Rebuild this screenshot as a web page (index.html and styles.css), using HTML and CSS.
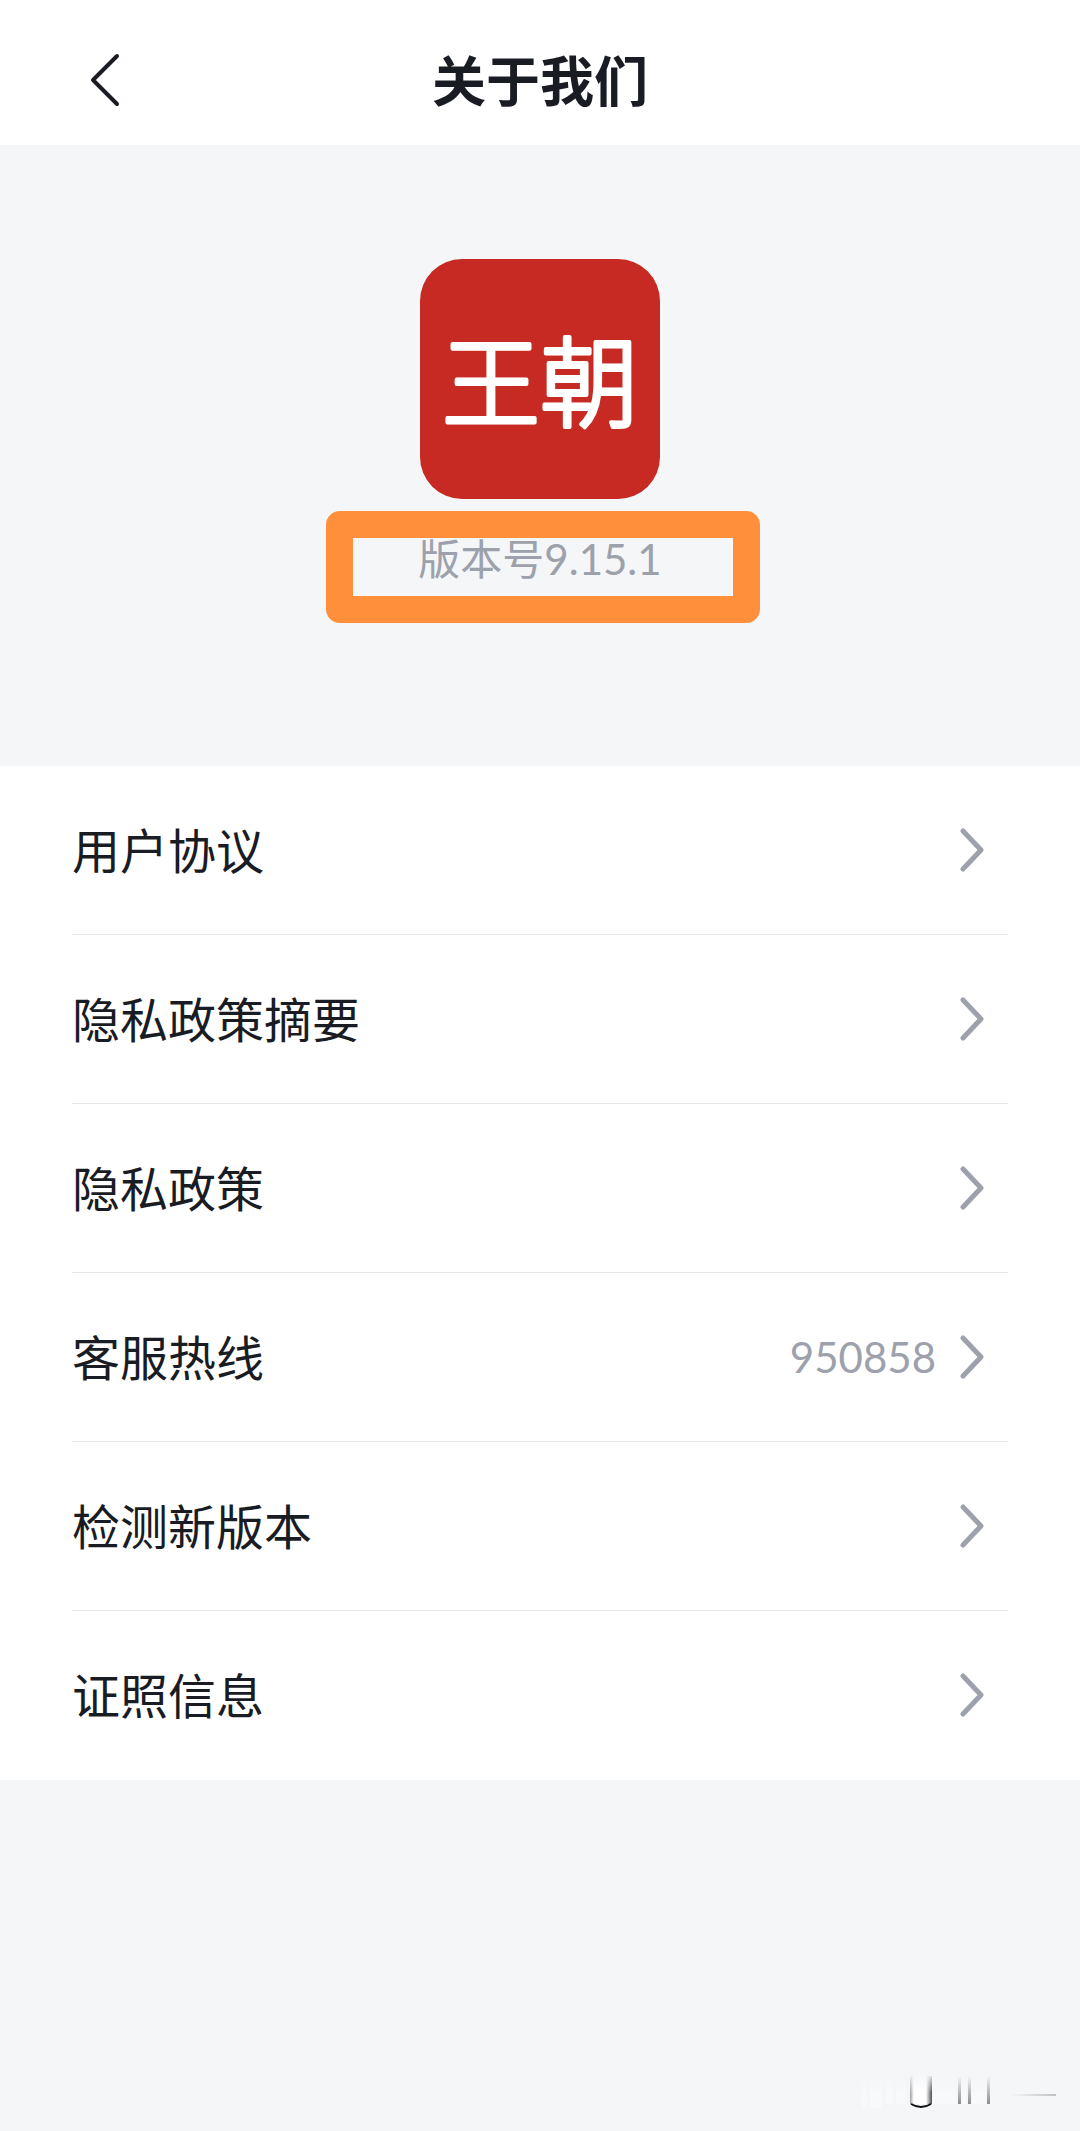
FILE: index.html
```html
<!DOCTYPE html>
<html lang="zh-CN">
<head>
  <meta charset="utf-8">
  <meta name="viewport" content="width=device-width">
  <title>关于我们</title>
  <link rel="stylesheet" href="styles.css">
</head>
<body>
  <header class="header">
    <button class="back" type="button" aria-label="返回">
      <svg width="32" height="56" viewBox="0 0 32 56"><path d="M29 4L5 28l24 24"/></svg>
    </button>
    <h1>关于我们</h1>
  </header>

  <main>
    <section class="about">
      <svg class="logo" width="240" height="240" viewBox="0 0 240 240">
        <rect width="240" height="240" rx="42"/>
        <text x="120" y="160" text-anchor="middle">王朝</text>
      </svg>
      <p class="version">版本号9.15.1</p>
    </section>

    <ul class="menu">
      <li><a href="#">
        <span class="label">用户协议</span>
        <svg class="arrow" width="24" height="44" viewBox="0 0 24 44"><path d="M3 3l18 19L3 41"/></svg>
      </a></li>
      <li><a href="#">
        <span class="label">隐私政策摘要</span>
        <svg class="arrow" width="24" height="44" viewBox="0 0 24 44"><path d="M3 3l18 19L3 41"/></svg>
      </a></li>
      <li><a href="#">
        <span class="label">隐私政策</span>
        <svg class="arrow" width="24" height="44" viewBox="0 0 24 44"><path d="M3 3l18 19L3 41"/></svg>
      </a></li>
      <li><a href="#">
        <span class="label">客服热线</span>
        <span class="value">950858</span>
        <svg class="arrow" width="24" height="44" viewBox="0 0 24 44"><path d="M3 3l18 19L3 41"/></svg>
      </a></li>
      <li><a href="#">
        <span class="label">检测新版本</span>
        <svg class="arrow" width="24" height="44" viewBox="0 0 24 44"><path d="M3 3l18 19L3 41"/></svg>
      </a></li>
      <li><a href="#">
        <span class="label">证照信息</span>
        <svg class="arrow" width="24" height="44" viewBox="0 0 24 44"><path d="M3 3l18 19L3 41"/></svg>
      </a></li>
    </ul>
  </main>

  <!-- faded mark in the corner -->
  <svg class="mark" width="216" height="40" viewBox="0 0 216 40" aria-hidden="true">
    <defs>
      <linearGradient id="fade" x1="0" y1="0" x2="0" y2="1">
        <stop offset="0" stop-color="#222" stop-opacity="0"/>
        <stop offset="1" stop-color="#222" stop-opacity=".5"/>
      </linearGradient>
      <linearGradient id="tail" x1="0" y1="0" x2="1" y2="0">
        <stop offset=".3" stop-color="#222" stop-opacity="0"/>
        <stop offset="1" stop-color="#222" stop-opacity=".25"/>
      </linearGradient>
      <linearGradient id="shadeLeft" x1="0" y1="0" x2="1" y2="0">
        <stop offset="0" stop-color="#222" stop-opacity=".4"/>
        <stop offset="1" stop-color="#222" stop-opacity="0"/>
      </linearGradient>
      <linearGradient id="shadeRight" x1="0" y1="0" x2="1" y2="0">
        <stop offset="0" stop-color="#222" stop-opacity="0"/>
        <stop offset="1" stop-color="#222" stop-opacity=".8"/>
      </linearGradient>
      <linearGradient id="reveal" x1="0" y1="0" x2="0" y2="1">
        <stop offset="0" stop-color="#000"/>
        <stop offset=".5" stop-color="#fff"/>
      </linearGradient>
      <mask id="top"><rect width="216" height="40" fill="url(#reveal)"/></mask>
    </defs>
    <g mask="url(#top)">
      <g fill="#fff" opacity=".3">
        <rect x="22" y="3" width="5" height="32"/>
        <rect x="30" y="3" width="12" height="32"/>
        <rect x="46" y="3" width="7" height="28"/>
        <rect x="56" y="3" width="10" height="28"/>
        <rect x="92" y="3" width="24" height="28"/>
        <rect x="122" y="3" width="4" height="28"/>
        <rect x="132" y="3" width="14" height="28"/>
      </g>
      <rect x="72" y="3" width="18" height="28" fill="#fff"/>
      <rect x="70" y="3" width="4" height="28" fill="url(#shadeLeft)"/>
      <rect x="86" y="3" width="6" height="28" fill="url(#shadeRight)"/>
    </g>
    <path d="M71 31q10 6 20 0" fill="none" stroke="#111" stroke-width="2"/>
    <rect x="118" y="3" width="3" height="28" fill="url(#fade)"/>
    <rect x="128" y="3" width="3" height="28" fill="url(#fade)"/>
    <rect x="147" y="3" width="3" height="28" fill="url(#fade)"/>
    <rect x="152" y="21" width="64" height="2" fill="url(#tail)"/>
  </svg>
</body>
</html>
```
FILE: styles.css
```css
*,
*::after {
  box-sizing: border-box;
}

body {
  position: relative;
  min-height: 100vh;
  margin: 0;
  background: #f4f6f8;
  color: #1a1c24;
  font-family: Lato, "Noto Sans CJK SC", sans-serif;
}

.header {
  display: grid;
  grid-template-columns: 88px 1fr 88px;
  align-items: center;
  padding: 38px 32px 24px;
  background: #fff;
}

.header h1 {
  margin: 0;
  padding-top: 4px;
  font-size: 54px;
  font-weight: bold;
  line-height: 79px;
  text-align: center;
}

.back {
  display: flex;
  justify-content: flex-end;
  padding: 0;
  border: 0;
  background: none;
  cursor: pointer;
}

.back svg,
.arrow {
  fill: none;
  stroke: #1a1c24;
  stroke-width: 5;
  stroke-linecap: round;
  stroke-linejoin: round;
}

.back svg {
  stroke-width: 4;
}

.about {
  display: flex;
  flex-direction: column;
  align-items: center;
  padding: 114px 0 177px;
}

.logo rect {
  fill: #c62a22;
}

.logo text {
  fill: #fff;
  stroke: #fff;
  stroke-width: 4;
  stroke-linejoin: round;
  font-family: "Noto Sans CJK SC", sans-serif;
  font-size: 98px;
  font-weight: 300;
}

.version {
  position: relative;
  margin: 30px 0 0;
  color: #9da1ac;
  font-size: 42px;
  line-height: 60px;
}

/* highlight frame round the version number */
.version::after {
  content: "";
  position: absolute;
  top: -18px;
  left: 50%;
  width: 434px;
  height: 112px;
  margin-left: -214px;
  border: 27px solid #ff8f3a;
  border-radius: 14px;
}

.menu {
  margin: 0;
  padding: 0 72px;
  background: #fff;
  list-style: none;
}

.menu li {
  border-bottom: 1px solid #e6e7ea;
}

.menu li:last-child {
  border-color: transparent;
}

.menu a {
  display: flex;
  align-items: center;
  height: 168px;
  padding-right: 24px;
  color: inherit;
  text-decoration: none;
}

.label {
  flex: 1;
  padding-bottom: 4px;
  font-size: 48px;
}

.value {
  margin-right: 24px;
  color: #9da1ac;
  font-size: 42px;
}

.arrow {
  stroke: #9da1ac;
}

.mark {
  position: absolute;
  right: 24px;
  bottom: 18px;
}
```
